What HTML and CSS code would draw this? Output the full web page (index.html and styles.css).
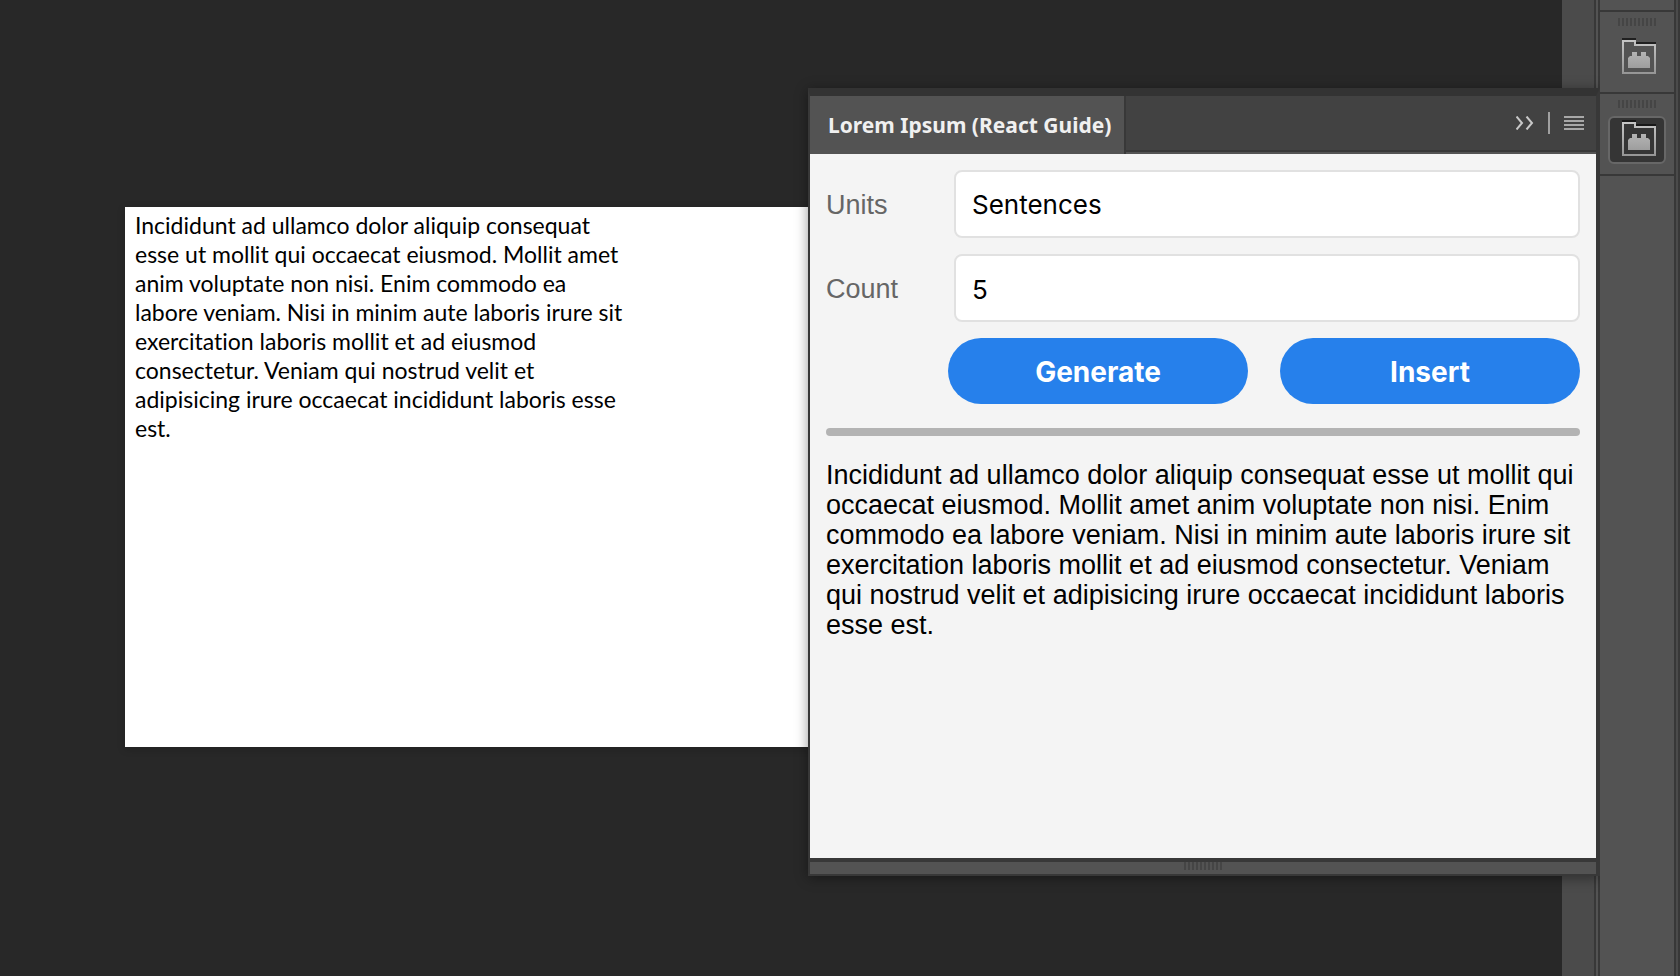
FILE: index.html
```html
<!DOCTYPE html>
<html lang="en">
<head>
<meta charset="utf-8">
<title>Lorem Ipsum (React Guide)</title>
<link rel="stylesheet" href="styles.css">
</head>
<body>
<div class="workspace">
  <main class="canvas">
    <article class="artboard">
      <p class="artboard-text">Incididunt ad ullamco dolor aliquip consequat<br>esse ut mollit qui occaecat eiusmod. Mollit amet<br>anim voluptate non nisi. Enim commodo ea<br>labore veniam. Nisi in minim aute laboris irure sit<br>exercitation laboris mollit et ad eiusmod<br>consectetur. Veniam qui nostrud velit et<br>adipisicing irure occaecat incididunt laboris esse<br>est.</p>
    </article>
  </main>
  <div class="scroll-track"></div>
  <div class="gutter"></div>
  <nav class="dock" aria-label="Panels">
    <div class="dock-cap"></div>
    <div class="dock-group">
      <span class="grip"></span>
      <button class="dock-button" type="button" aria-label="Plugin panel">
        <svg class="dock-icon" viewBox="0 0 34 36"><defs><linearGradient id="metal" x1="0" y1="0" x2="0" y2="36" gradientUnits="userSpaceOnUse"><stop offset="0" stop-color="#c8c8c8"/><stop offset="1" stop-color="#959595"/></linearGradient></defs><path d="M0 0H14V2H0ZM14 4H34V6H14Z" fill="#202020"/><path d="M0 2H14V6H34V36H0ZM2 4V34H32V8H12V4Z" fill="url(#metal)" fill-rule="evenodd"/><path d="M6 20L8 18H10V14H15V18H19V14H24V18H26L28 20V30H6Z" fill="url(#metal)"/></svg>
      </button>
    </div>
    <div class="dock-group">
      <span class="grip"></span>
      <button class="dock-button dock-button-active" type="button" aria-label="Lorem Ipsum panel">
        <svg class="dock-icon" viewBox="0 0 34 36"><path d="M0 0H14V2H0ZM14 4H34V6H14Z" fill="#181818"/><path d="M0 2H14V6H34V36H0ZM2 4V34H32V8H12V4Z" fill="url(#metal)" fill-rule="evenodd"/><path d="M6 20L8 18H10V14H15V18H19V14H24V18H26L28 20V30H6Z" fill="url(#metal)"/></svg>
      </button>
    </div>
  </nav>
  <div class="edge"></div>

  <section class="panel">
    <header class="panel-header">
      <h1 class="tab">Lorem Ipsum (React Guide)</h1>
      <div class="panel-tools">
        <button class="tool" type="button" aria-label="Collapse"><svg width="18" height="14" viewBox="0 0 18 14"><path d="M0.5 0.5L6 7L0.5 13.5M10.5 0.5L16 7L10.5 13.5" fill="none" stroke="#c8c8c8" stroke-width="2"/></svg></button>
        <span class="tool-divider"></span>
        <button class="tool" type="button" aria-label="Panel menu"><svg width="20" height="14" viewBox="0 0 20 14"><path d="M0 1H20M0 5H20M0 9H20M0 13H20" stroke="#a8a8a8" stroke-width="2"/></svg></button>
      </div>
    </header>
    <form class="panel-body">
      <div class="field">
        <label class="label" for="units">Units</label>
        <select class="control" id="units"><option>Sentences</option><option>Paragraphs</option><option>Words</option></select>
      </div>
      <div class="field">
        <label class="label" for="count">Count</label>
        <input class="control" id="count" type="text" value="5">
      </div>
      <div class="actions">
        <button class="action" type="button">Generate</button>
        <button class="action" type="button">Insert</button>
      </div>
      <hr class="divider">
      <p class="result">Incididunt ad ullamco dolor aliquip consequat esse ut mollit qui<br>occaecat eiusmod. Mollit amet anim voluptate non nisi. Enim<br>commodo ea labore veniam. Nisi in minim aute laboris irure sit<br>exercitation laboris mollit et ad eiusmod consectetur. Veniam<br>qui nostrud velit et adipisicing irure occaecat incididunt laboris<br>esse est.</p>
    </form>
    <footer class="panel-footer"><span class="grip"></span></footer>
  </section>
</div>
</body>
</html>
```
FILE: styles.css
```css
* { box-sizing: border-box; }
body { margin: 0; background: #282828; }
button { padding: 0; border: 0; background: none; }
p, h1 { margin: 0; }
svg { display: block; }

.workspace { position: relative; display: flex; min-height: 100vh; overflow: hidden; }
.canvas { position: relative; flex: 1; background: #282828; }
.scroll-track { width: 32px; background: #4b4b4b; }
.gutter { width: 6px; background: #535353; border: solid #383838; border-width: 0 2px; }
.edge { width: 6px; background: #4b4b4b; border: solid #383838; border-width: 0 2px; }

.artboard {
  position: absolute; top: 207px; left: 125px; right: 200px;
  height: 540px; padding: 4px 10px;
  background: #fff; box-shadow: 0 2px 8px rgba(0, 0, 0, .2);
}
.artboard-text {
  font: 23px/29px Lato, sans-serif; font-variant-ligatures: none;
  color: #000; white-space: nowrap;
}

.dock { width: 74px; background: #535353; }
.dock-cap { height: 12px; border-bottom: 2px solid #383838; }
.dock-group {
  display: flex; flex-direction: column; align-items: center; gap: 8px;
  height: 82px; padding-top: 6px; border-bottom: 2px solid #383838;
}
.grip {
  flex: none; width: 38px; height: 8px;
  background: repeating-linear-gradient(90deg, #454545 0 2px, transparent 2px 4px);
}
.dock-button {
  display: flex; justify-content: center; align-items: center;
  width: 58px; height: 48px; border: 2px solid transparent; border-radius: 6px;
}
.dock-button-active { background: #353535; border-color: #676767; }
.dock-icon { width: 34px; height: 36px; margin: 0 0 4px 4px; }

.panel {
  position: absolute; top: 88px; right: 80px;
  display: flex; flex-direction: column;
  width: 792px; min-height: 788px;
  background: #535353;
  border: solid #383838; border-width: 8px 4px 2px 2px; border-top-color: #333;
  box-shadow: 0 2px 12px rgba(0, 0, 0, .4);
  clip-path: inset(-30px 0 -30px -30px);
}
.panel-header { display: flex; height: 58px; border-bottom: 2px solid #535353; background: #424242; }
.tab {
  width: 316px; height: 58px; padding: 0 18px;
  background: #535353; border-right: 2px solid #383838;
  font: 700 21px/58px "Noto Sans", sans-serif; color: #f0f0f0; white-space: nowrap;
}
.panel-tools {
  display: flex; flex: 1; justify-content: flex-end; align-items: center; gap: 14px;
  padding-right: 12px; border-bottom: 2px solid #383838;
}
.tool-divider { width: 2px; height: 22px; background: #a0a0a0; }

.panel-body { display: flex; flex-direction: column; flex: 1; gap: 16px; padding: 16px; background: #f4f4f4; }
.field { display: flex; align-items: center; }
.label { width: 128px; padding-top: 2px; font: 27px/30px "Liberation Sans", sans-serif; color: #666; }
.control {
  flex: 1; min-width: 0; height: 68px; padding: 2px 16px 0; appearance: none;
  font: 26px/30px Inter, sans-serif; color: #000;
  background: #fff; border: 2px solid #e1e1e1; border-radius: 8px;
}
.actions { display: flex; gap: 32px; margin-left: 122px; }
.action {
  flex: 1; height: 66px; padding-top: 2px; border-radius: 33px; background: #2680eb;
  font: 700 28px/30px Inter, sans-serif; color: #fff;
}
.divider { width: 100%; height: 8px; margin: 8px 0; border: 0; border-radius: 4px; background: #b3b3b3; }
.result { font: 27px/30px "Liberation Sans", sans-serif; color: #000; white-space: nowrap; }
.panel-footer {
  display: flex; justify-content: center; height: 16px;
  border-top: 4px solid #383838; background: #535353;
}
```
